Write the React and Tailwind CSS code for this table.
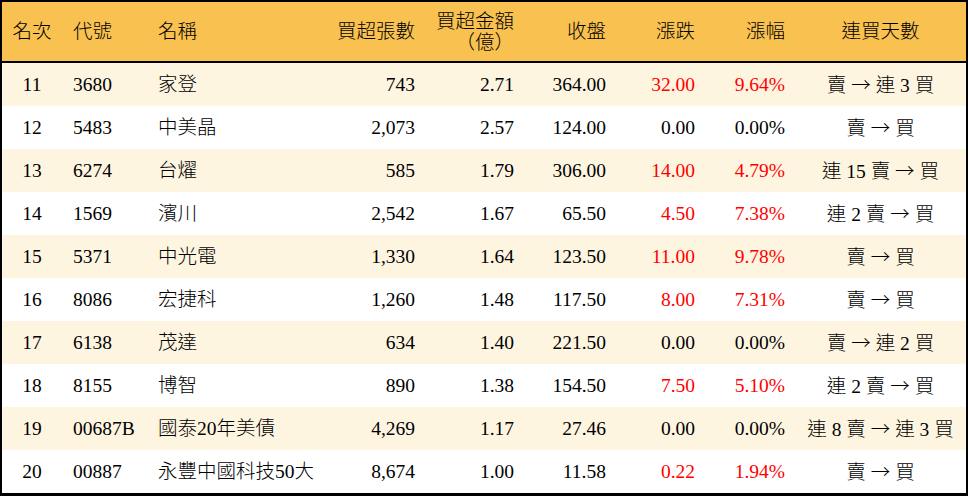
import React from "react";

const rows = [
  { rank: 11, code: "3680", name: "家登", lots: "743", amt: "2.71", close: "364.00", chg: "32.00", pct: "9.64%", days: ["賣", "連 3 買"], up: true },
  { rank: 12, code: "5483", name: "中美晶", lots: "2,073", amt: "2.57", close: "124.00", chg: "0.00", pct: "0.00%", days: ["賣", "買"], up: false },
  { rank: 13, code: "6274", name: "台燿", lots: "585", amt: "1.79", close: "306.00", chg: "14.00", pct: "4.79%", days: ["連 15 賣", "買"], up: true },
  { rank: 14, code: "1569", name: "濱川", lots: "2,542", amt: "1.67", close: "65.50", chg: "4.50", pct: "7.38%", days: ["連 2 賣", "買"], up: true },
  { rank: 15, code: "5371", name: "中光電", lots: "1,330", amt: "1.64", close: "123.50", chg: "11.00", pct: "9.78%", days: ["賣", "買"], up: true },
  { rank: 16, code: "8086", name: "宏捷科", lots: "1,260", amt: "1.48", close: "117.50", chg: "8.00", pct: "7.31%", days: ["賣", "買"], up: true },
  { rank: 17, code: "6138", name: "茂達", lots: "634", amt: "1.40", close: "221.50", chg: "0.00", pct: "0.00%", days: ["賣", "連 2 買"], up: false },
  { rank: 18, code: "8155", name: "博智", lots: "890", amt: "1.38", close: "154.50", chg: "7.50", pct: "5.10%", days: ["連 2 賣", "買"], up: true },
  { rank: 19, code: "00687B", name: "國泰20年美債", lots: "4,269", amt: "1.17", close: "27.46", chg: "0.00", pct: "0.00%", days: ["連 8 賣", "連 3 買"], up: false },
  { rank: 20, code: "00887", name: "永豐中國科技50大", lots: "8,674", amt: "1.00", close: "11.58", chg: "0.22", pct: "1.94%", days: ["賣", "買"], up: true },
];

const grid = "grid grid-cols-[60px_88px_180px_95px_99px_92px_89px_90px_171px]";

const App = () => {
  return (
    <div
      className="w-[968px] h-[496px] bg-black pt-[2px] px-[2px] pb-[3px] text-black text-[19.5px] font-light"
      style={{ fontFamily: '"Liberation Serif", "Noto Sans CJK TC", serif' }}
    >
      {/* header */}
      <div className={`${grid} h-[59px] bg-[#f9c14f] items-center border-b-2 border-black box-content`}>
        <div className="text-center">名次</div>
        <div className="pl-[11px]">代號</div>
        <div className="pl-[8px]">名稱</div>
        <div className="text-right pr-[10px]">買超張數</div>
        <div className="text-right pr-[10px] leading-[21px]">
          買超金額
          <br />
          （億）
        </div>
        <div className="text-right pr-[10px]">收盤</div>
        <div className="text-right pr-[10px]">漲跌</div>
        <div className="text-right pr-[10px]">漲幅</div>
        <div className="text-center">連買天數</div>
      </div>

      {rows.map((r, i) => (
        <div
          key={r.rank}
          className={`${grid} h-[43px] items-center ${i % 2 === 0 ? "bg-[#fef5e1]" : "bg-white"}`}
        >
          <div className="text-center">{r.rank}</div>
          <div className="pl-[11px]">{r.code}</div>
          <div className="pl-[8px] whitespace-nowrap">{r.name}</div>
          <div className="text-right pr-[10px]">{r.lots}</div>
          <div className="text-right pr-[10px]">{r.amt}</div>
          <div className="text-right pr-[10px]">{r.close}</div>
          <div className={`text-right pr-[10px] ${r.up ? "text-[#ff0000]" : ""}`}>{r.chg}</div>
          <div className={`text-right pr-[10px] ${r.up ? "text-[#ff0000]" : ""}`}>{r.pct}</div>
          <div className="text-center whitespace-nowrap">
            {r.days[0]}{" "}
            <span style={{ fontFamily: '"Noto Sans CJK TC", sans-serif' }}>→</span>{" "}
            {r.days[1]}
          </div>
        </div>
      ))}
    </div>
  );
};

export default App;
